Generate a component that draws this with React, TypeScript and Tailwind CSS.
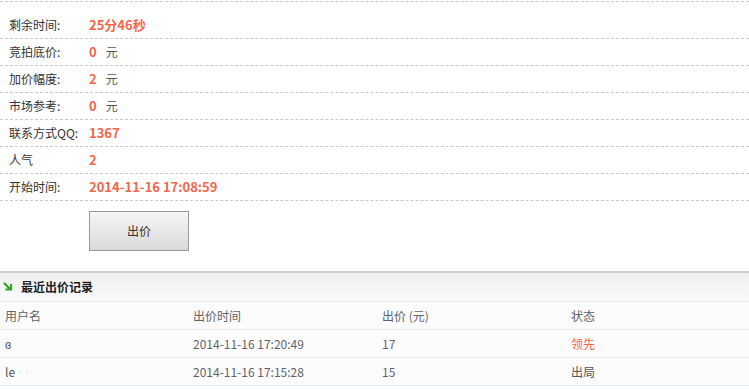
const font = { fontFamily: '"Microsoft YaHei", "Noto Sans CJK SC", "Liberation Sans", sans-serif' }

const rows = [
  { label: "剩余时间:", value: "25分46秒" },
  { label: "竞拍底价:", value: "0", unit: "元" },
  { label: "加价幅度:", value: "2", unit: "元" },
  { label: "市场参考:", value: "0", unit: "元" },
  { label: "联系方式QQ:", value: "1367" },
  { label: "人气", value: "2" },
  { label: "开始时间:", value: "2014-11-16 17:08:59" },
]

const bids = [
  { user: "ɞ", time: "2014-11-16 17:20:49", price: "17", status: "领先", lead: true },
  { user: "le", time: "2014-11-16 17:15:28", price: "15", status: "出局", lead: false },
]

function Arrow() {
  return (
    <svg width="10" height="10" viewBox="0 0 10 10">
      <path d="M1 1 L7 7 M2.5 7.5 L8 7.5 L8 2" stroke="#2aa81a" strokeWidth="2.2" fill="none" />
    </svg>
  )
}

export default function App() {
  return (
    <div className="w-[749px] h-[389px] bg-white overflow-hidden text-[12px]" style={font}>
      <div className="h-[2px] border-b border-dashed border-[#c8c8c8]"></div>
      <div className="mt-[10px]">
        {rows.map((r) => (
          <div key={r.label} className="h-[27px] flex items-center border-b border-dashed border-[#c8c8c8]">
            <span className="w-[89px] pl-[9px] text-[#333]">{r.label}</span>
            <span className="font-bold text-[#f4664a] text-[13px]">{r.value}</span>
            {r.unit && <span className="ml-[9px] text-[#555]">{r.unit}</span>}
          </div>
        ))}
      </div>

      <div className="pl-[89px] pt-[10px] h-[70px]">
        <button className="w-[100px] h-[40px] border border-[#9a9a9a] bg-gradient-to-b from-[#f6f6f6] to-[#d9d9d9] text-[#333] text-[12px]">
          出价
        </button>
      </div>

      <div className="border-t-2 border-[#c6d0d6] h-[31px] bg-gradient-to-b from-[#efefef] to-[#fafafa] border-b border-b-[#dde7ef] flex items-center pl-[3px] gap-[8px]">
        <Arrow />
        <span className="font-bold text-[#222] text-[12px]">最近出价记录</span>
      </div>

      <div className="bg-[#fcfcfc] text-[#5f6368]">
        <div className="grid grid-cols-[188px_189px_189px_1fr] h-[28px] items-center border-b border-[#e0e8f0]">
          <span className="pl-[5px]">用户名</span>
          <span className="pl-[5px]">出价时间</span>
          <span className="pl-[5px]">出价 (元)</span>
          <span className="pl-[5px]">状态</span>
        </div>
        {bids.map((b) => (
          <div key={b.time} className="grid grid-cols-[188px_189px_189px_1fr] h-[28px] items-center border-b border-[#e0e8f0]">
            <span className="pl-[5px] text-[#555]">
              {b.user}
              <span className="text-[#ddd]">{b.lead ? "" : " ‥"}</span>
            </span>
            <span className="pl-[5px]">{b.time}</span>
            <span className="pl-[5px]">{b.price}</span>
            <span className={b.lead ? "pl-[5px] text-[#f4664a]" : "pl-[5px] text-[#555]"}>{b.status}</span>
          </div>
        ))}
      </div>
    </div>
  )
}
